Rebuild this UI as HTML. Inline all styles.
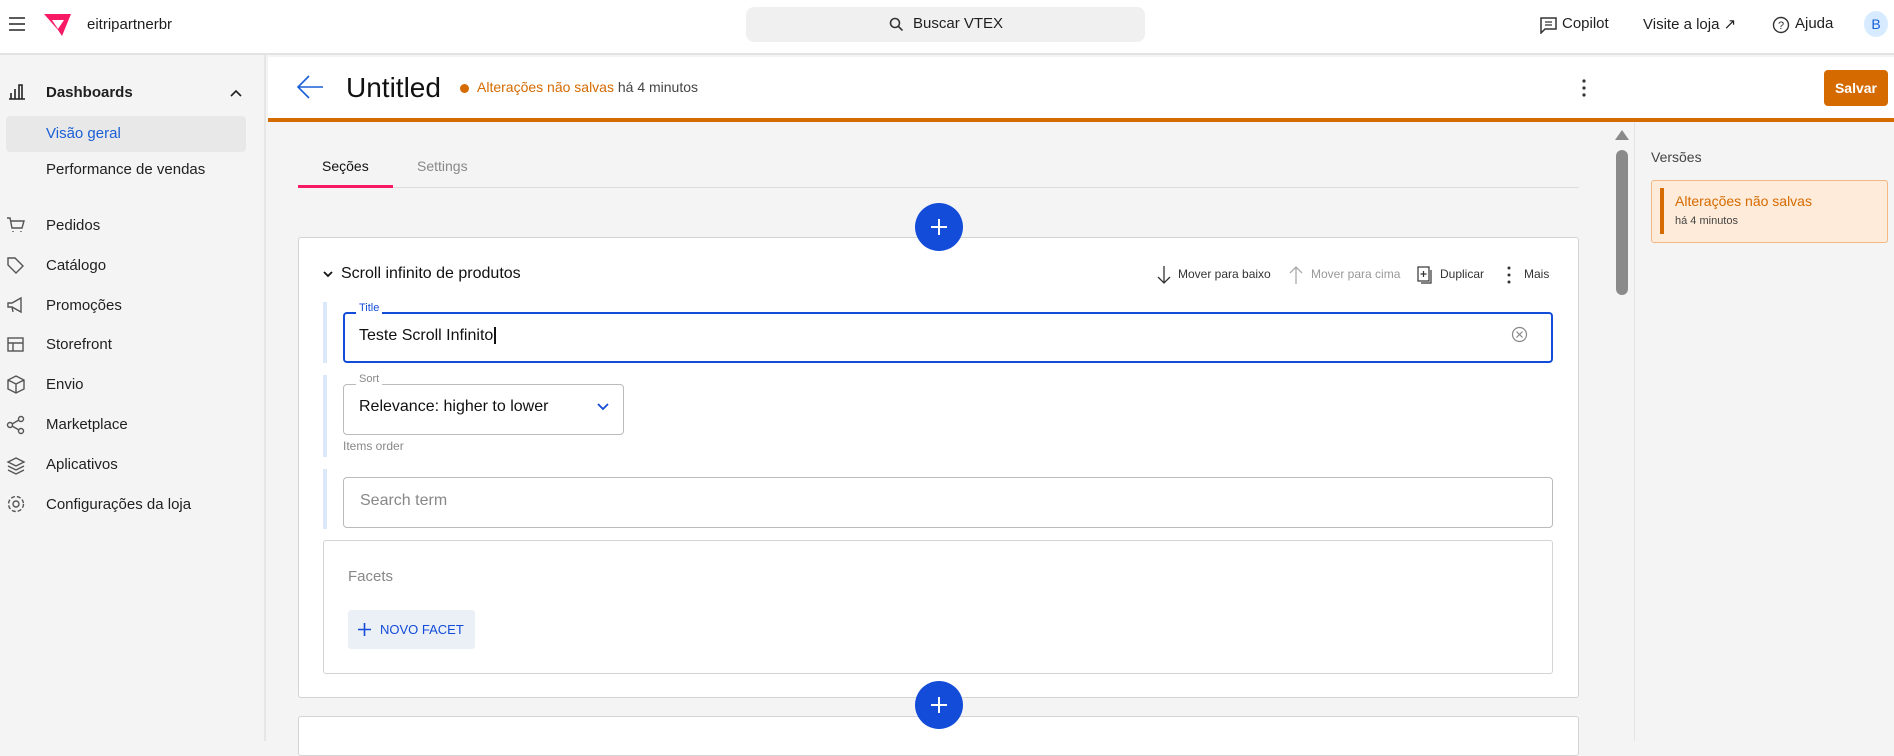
<!DOCTYPE html>
<html><head><meta charset="utf-8"><style>
*{box-sizing:border-box;margin:0;padding:0}
body{width:1894px;height:741px;overflow:hidden;font-family:"Liberation Sans",sans-serif;color:#1f1f1f;background:#f4f4f4;position:relative;font-size:15px}
.a{position:absolute;white-space:nowrap}
.top{left:0;top:0;width:1894px;height:55px;background:#fff;border-bottom:2px solid #e3e3e3}
.side{left:0;top:55px;width:266px;height:686px;background:#f4f4f4;border-right:2px solid #e6e6e6}
.si{left:46px;font-size:15px;color:#1f1f1f}
.ic{left:8px;width:18px;height:18px}
</style></head><body>
<div class="a top"></div>
<svg class="a" style="left:9px;top:17px" width="16" height="14"><path d="M0 1h16M0 7h16M0 13h16" stroke="#444" stroke-width="1.8"/></svg>
<svg class="a" style="left:44px;top:14px" width="28" height="22"><path d="M0 0h27l-9 22-4-6z" fill="#f71963"/><path d="M8 6h12l-6 9z" fill="#fff"/></svg>
<div class="a" style="left:87px;top:16px;font-size:15px">eitripartnerbr</div>
<div class="a" style="left:746px;top:7px;width:399px;height:35px;background:#f0f0f0;border-radius:8px"></div>
<svg class="a" style="left:889px;top:17px" width="14" height="14"><circle cx="6" cy="6" r="4.5" fill="none" stroke="#333" stroke-width="1.6"/><path d="M9.5 9.5l4 4" stroke="#333" stroke-width="1.6"/></svg>
<div class="a" style="left:913px;top:15px;font-size:15px">Buscar VTEX</div>
<svg class="a" style="left:1540px;top:17px" width="17" height="17"><path d="M1 1h15v11H5l-4 4z" fill="none" stroke="#333" stroke-width="1.5"/><path d="M5 5h7M5 8h7" stroke="#333" stroke-width="1.3"/></svg>
<div class="a" style="left:1562px;top:15px;font-size:15px">Copilot</div>
<div class="a" style="left:1643px;top:15px;font-size:15px">Visite a loja ↗</div>
<svg class="a" style="left:1772px;top:16px" width="18" height="18"><circle cx="9" cy="9" r="7.5" fill="none" stroke="#333" stroke-width="1.4"/><text x="9" y="13" font-size="11" text-anchor="middle" fill="#333" font-family="Liberation Sans">?</text></svg>
<div class="a" style="left:1795px;top:15px;font-size:15px">Ajuda</div>
<div class="a" style="left:1864px;top:11px;width:24px;height:26px;border-radius:50%;background:#d6ebff;color:#1a5fd6;font-size:14px;text-align:center;line-height:26px">B</div>

<div class="a side"></div>
<svg class="a" style="left:8px;top:84px" width="18" height="16"><path d="M1 15h16M3 15V9M7 15V5M11 15V1h3v14" fill="none" stroke="#222" stroke-width="1.6"/></svg>
<div class="a si" style="top:84px;font-weight:bold">Dashboards</div>
<svg class="a" style="left:230px;top:89px" width="12" height="8"><path d="M1 7l5-5 5 5" fill="none" stroke="#222" stroke-width="1.6"/></svg>
<div class="a" style="left:6px;top:116px;width:240px;height:36px;background:#e8e8e8;border-radius:4px"></div>
<div class="a si" style="top:125px;color:#1a5fd6">Visão geral</div>
<div class="a si" style="top:161px">Performance de vendas</div>
<div class="a si" style="top:217px">Pedidos</div>
<div class="a si" style="top:257px">Catálogo</div>
<div class="a si" style="top:297px">Promoções</div>
<div class="a si" style="top:336px">Storefront</div>
<div class="a si" style="top:376px">Envio</div>
<div class="a si" style="top:416px">Marketplace</div>
<div class="a si" style="top:456px">Aplicativos</div>
<div class="a si" style="top:496px">Configurações da loja</div>
<svg class="a" style="left:6px;top:216px" width="20" height="300" fill="none" stroke="#555" stroke-width="1.4">
<path d="M1 2h3l2 10h10l2-7H5M7 15v1M15 15v1"/>
<path d="M2 42v7l8 8 7-7-8-8z" />
<path d="M2 87h4l9-5v14l-9-5H2zM6 91l1 5"/>
<rect x="2" y="122" width="15" height="13"/><path d="M2 127h15M7 127v8"/>
<path d="M10 160l8 4v9l-8 4-8-4v-9zM2 164l8 4 8-4M10 168v9"/>
<circle cx="4" cy="209" r="2.5"/><circle cx="15" cy="203" r="2.5"/><circle cx="15" cy="215" r="2.5"/><path d="M6 208l7-4M6 210l7 4"/>
<path d="M10 242l8 4-8 4-8-4zM2 250l8 4 8-4M2 254l8 4 8-4"/>
<circle cx="10" cy="288" r="3"/><circle cx="10" cy="288" r="7.5" stroke-dasharray="4 2"/>
</svg>

<div class="a" style="left:268px;top:57px;width:1626px;height:64px;background:#fff"></div>
<div class="a" style="left:268px;top:118px;width:1626px;height:4px;background:#d56a00"></div>
<svg class="a" style="left:297px;top:75px" width="27" height="24"><path d="M26 12H2M12 1L1 12l11 11" fill="none" stroke="#1a5fd6" stroke-width="1.6"/></svg>
<div class="a" style="left:346px;top:72px;font-size:28px;color:#111">Untitled</div>
<div class="a" style="left:460px;top:84px;width:9px;height:9px;border-radius:50%;background:#d56a00"></div>
<div class="a" style="left:477px;top:79px;font-size:14px;color:#d56a00">Alterações não salvas <span style="color:#444">há 4 minutos</span></div>
<svg class="a" style="left:1581px;top:79px" width="6" height="18"><circle cx="3" cy="2" r="1.6" fill="#333"/><circle cx="3" cy="9" r="1.6" fill="#333"/><circle cx="3" cy="16" r="1.6" fill="#333"/></svg>
<div class="a" style="left:1824px;top:70px;width:64px;height:36px;background:#d56a00;border-radius:4px;color:#fff;font-weight:bold;font-size:14px;text-align:center;line-height:36px">Salvar</div>

<div class="a" style="left:322px;top:158px;font-size:14px;color:#111">Seções</div>
<div class="a" style="left:417px;top:158px;font-size:14px;color:#888">Settings</div>
<div class="a" style="left:298px;top:187px;width:1281px;height:1px;background:#ddd"></div>
<div class="a" style="left:298px;top:185px;width:95px;height:3px;background:#f71963"></div>

<div class="a" style="left:1613px;top:128px;width:18px;height:613px"></div>
<svg class="a" style="left:1614px;top:129px" width="16" height="12"><path d="M8 1l7 10H1z" fill="#8a8a8a"/></svg>
<div class="a" style="left:1616px;top:150px;width:12px;height:145px;background:#8a8a8a;border-radius:6px"></div>
<div class="a" style="left:1634px;top:122px;width:260px;height:619px;background:#f4f4f4;border-left:1px solid #e3e3e3"></div>
<div class="a" style="left:1651px;top:149px;font-size:14px;color:#444">Versões</div>
<div class="a" style="left:1651px;top:180px;width:237px;height:63px;background:#feebd9;border:1px solid #f3b783;border-radius:3px"></div>
<div class="a" style="left:1660px;top:188px;width:4px;height:46px;background:#d56a00"></div>
<div class="a" style="left:1675px;top:193px;font-size:14px;color:#d56a00">Alterações não salvas</div>
<div class="a" style="left:1675px;top:215px;font-size:11px;color:#444">há 4 minutos</div>

<div class="a" style="left:298px;top:237px;width:1281px;height:461px;background:#fff;border:1px solid #d4d4d4;border-radius:3px"></div>
<div class="a" style="left:298px;top:716px;width:1281px;height:40px;background:#fff;border:1px solid #d4d4d4;border-radius:3px"></div>
<div class="a" style="left:915px;top:203px;width:48px;height:48px;border-radius:50%;background:#134cd8"></div>
<div class="a" style="left:915px;top:681px;width:48px;height:48px;border-radius:50%;background:#134cd8"></div>
<svg class="a" style="left:930px;top:218px" width="18" height="18"><path d="M9 1v16M1 9h16" stroke="#fff" stroke-width="2"/></svg>
<svg class="a" style="left:930px;top:696px" width="18" height="18"><path d="M9 1v16M1 9h16" stroke="#fff" stroke-width="2"/></svg>

<svg class="a" style="left:323px;top:271px" width="10" height="7"><path d="M1 1l4 4 4-4" fill="none" stroke="#111" stroke-width="1.8"/></svg>
<div class="a" style="left:341px;top:265px;font-size:16px;color:#111">Scroll infinito de produtos</div>
<svg class="a" style="left:1156px;top:265px" width="16" height="20"><path d="M8 1v17M2 12l6 6 6-6" fill="none" stroke="#333" stroke-width="1.3"/></svg>
<div class="a" style="left:1178px;top:267px;font-size:12px;color:#333">Mover para baixo</div>
<svg class="a" style="left:1288px;top:265px" width="16" height="20"><path d="M8 19V2M2 8l6-6 6 6" fill="none" stroke="#aaa" stroke-width="1.3"/></svg>
<div class="a" style="left:1311px;top:267px;font-size:12px;color:#999">Mover para cima</div>
<svg class="a" style="left:1417px;top:266px" width="15" height="18"><rect x="1" y="1" width="11" height="14" fill="none" stroke="#333" stroke-width="1.2"/><path d="M6.5 5v6M3.5 8h6M14 4v13H4" fill="none" stroke="#333" stroke-width="1.2"/></svg>
<div class="a" style="left:1440px;top:267px;font-size:12px;color:#333">Duplicar</div>
<svg class="a" style="left:1506px;top:266px" width="6" height="18"><circle cx="3" cy="2" r="1.5" fill="#333"/><circle cx="3" cy="9" r="1.5" fill="#333"/><circle cx="3" cy="16" r="1.5" fill="#333"/></svg>
<div class="a" style="left:1524px;top:267px;font-size:12px;color:#333">Mais</div>

<div class="a" style="left:323px;top:302px;width:4px;height:61px;background:#dbe7fb"></div>
<div class="a" style="left:323px;top:375px;width:4px;height:82px;background:#dbe7fb"></div>
<div class="a" style="left:323px;top:469px;width:4px;height:60px;background:#dbe7fb"></div>

<div class="a" style="left:343px;top:312px;width:1210px;height:51px;border:2px solid #134cd8;border-radius:4px"></div>
<div class="a" style="left:356px;top:302px;background:#fff;padding:0 3px;font-size:11px;color:#134cd8">Title</div>
<div class="a" style="left:359px;top:327px;font-size:16px;color:#111">Teste Scroll Infinito<span style="border-left:2px solid #111;margin-left:1px"></span></div>
<svg class="a" style="left:1511px;top:326px" width="17" height="17"><circle cx="8.5" cy="8.5" r="7" fill="none" stroke="#888" stroke-width="1.2"/><path d="M5.5 5.5l6 6M11.5 5.5l-6 6" stroke="#888" stroke-width="1.2"/></svg>

<div class="a" style="left:343px;top:384px;width:281px;height:51px;border:1px solid #bbb;border-radius:4px"></div>
<div class="a" style="left:356px;top:373px;background:#fff;padding:0 3px;font-size:11px;color:#888">Sort</div>
<div class="a" style="left:359px;top:398px;font-size:16px;color:#111">Relevance: higher to lower</div>
<svg class="a" style="left:597px;top:403px" width="12" height="8"><path d="M1 1l5 5 5-5" fill="none" stroke="#134cd8" stroke-width="1.8"/></svg>
<div class="a" style="left:343px;top:439px;font-size:12px;color:#888">Items order</div>

<div class="a" style="left:343px;top:477px;width:1210px;height:51px;border:1px solid #bbb;border-radius:4px"></div>
<div class="a" style="left:360px;top:492px;font-size:16px;color:#888">Search term</div>

<div class="a" style="left:323px;top:540px;width:1230px;height:134px;border:1px solid #d4d4d4;border-radius:3px"></div>
<div class="a" style="left:348px;top:568px;font-size:15px;color:#888">Facets</div>
<div class="a" style="left:348px;top:610px;width:127px;height:39px;background:#ebf0f7;border-radius:3px"></div>
<svg class="a" style="left:358px;top:623px" width="13" height="13"><path d="M6.5 0v13M0 6.5h13" stroke="#134cd8" stroke-width="1.6"/></svg>
<div class="a" style="left:380px;top:622px;font-size:13px;color:#134cd8">NOVO FACET</div>
</body></html>
